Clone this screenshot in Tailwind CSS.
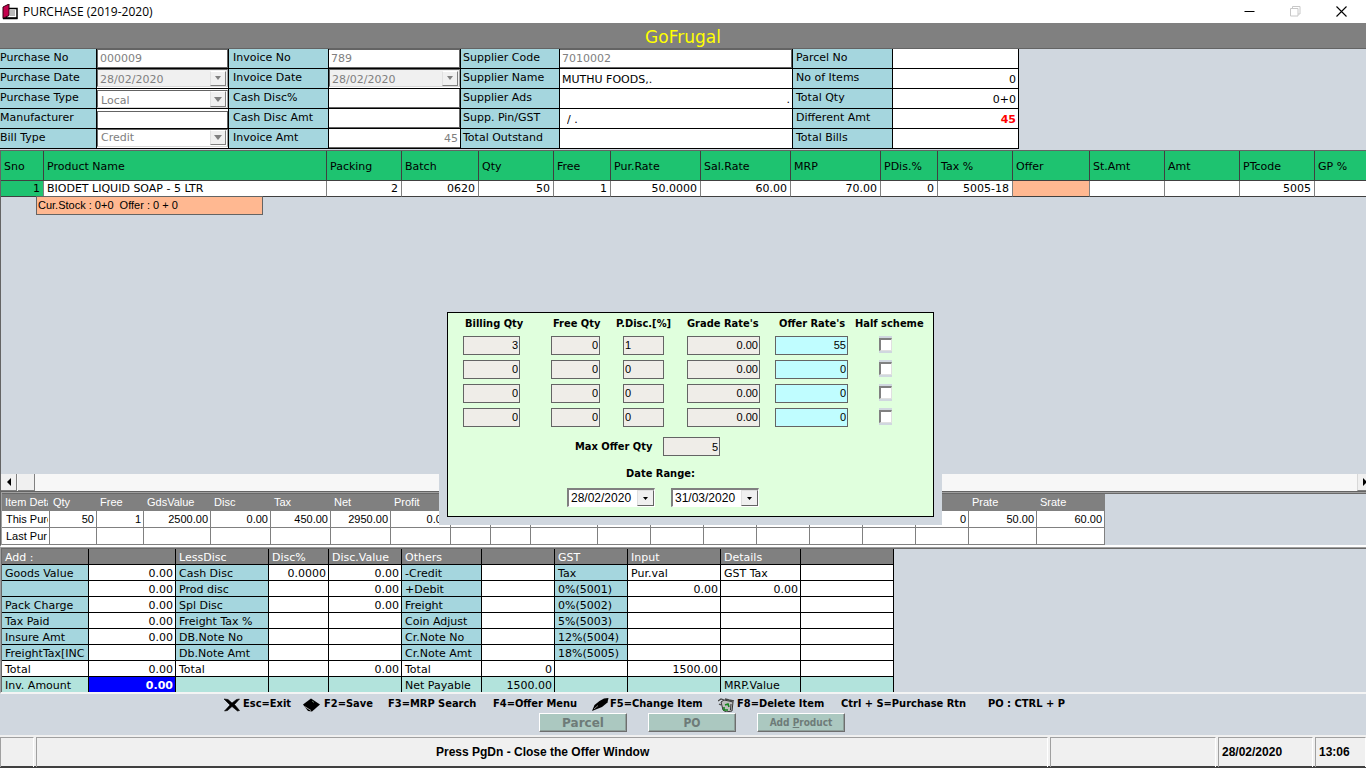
<!DOCTYPE html>
<html lang="en">
<head>
<meta charset="utf-8">
<meta name="viewport" content="width=device-width, initial-scale=1">
<title>PURCHASE (2019-2020)</title>
<script src="https://cdn.jsdelivr.net/npm/@tailwindcss/browser@4"></script>
</head>
<body class="bg-[#d0d7df] font-['DejaVu_Sans',sans-serif] text-[11px] text-black">
<div class="relative flex min-h-screen flex-col overflow-hidden">

  <!-- Window title bar -->
  <header class="flex h-[23px] items-center bg-white pl-[2px]">
    <svg class="h-[16px] w-[17px]" viewBox="0 0 17 16" aria-hidden="true">
      <path d="M5.500 4.500h9.500v9.500H4z" fill="#fff" stroke="#000" stroke-width="1.500"/>
      <path d="M8 7h5M8 9h5M8 11h5" stroke="#777"/>
      <path d="M1 3l6-3v11.500L1 14.500z" fill="#c4004c" stroke="#300010"/>
      <path d="M1 14.500h14.500" stroke="#000" stroke-width="1.500"/>
    </svg>
    <h1 class="ml-[4px] flex-1 font-['Open_Sans',sans-serif] text-[12px] leading-[22px]">PURCHASE (2019-2020)</h1>
    <div class="mr-[2px] flex h-[20px]">
      <button class="flex w-[46px] items-center justify-center" aria-label="Minimize"><svg class="h-[11px] w-[11px]" viewBox="0 0 11 11"><path d="M0.500 5.500h10" stroke="#000"/></svg></button>
      <button class="flex w-[46px] items-center justify-center" aria-label="Restore" disabled><svg class="h-[11px] w-[11px]" viewBox="0 0 11 11"><path d="M0.500 2.500h7.500v7.500H0.500zM2.500 2.500v-2h7.500v7.500h-2" fill="none" stroke="#c8c8c8"/></svg></button>
      <button class="flex w-[46px] items-center justify-center" aria-label="Close"><svg class="h-[11px] w-[11px]" viewBox="0 0 11 11"><path d="M0.500 0.500l10 10M10.500 0.500l-10 10" stroke="#000" stroke-width="1.100"/></svg></button>
    </div>
  </header>
  <div class="flex h-[26px] items-center justify-center border-b border-[#646464] bg-[#808080] pt-[3px] text-[17px] leading-[22px] text-[#ffff00]">GoFrugal</div>

  <!-- Purchase header fields -->
  <form class="grid auto-rows-[20px] grid-cols-[97px_132px_100px_132px_99px_233px_100px_126px] [&>div]:border-r [&>div]:border-b [&>div]:border-black [&>div]:bg-white [&>label]:border-r [&>label]:border-b [&>label]:border-black [&>label]:bg-[#a5d6de] [&>label]:leading-[17px] [&>label]:whitespace-nowrap [&_input]:h-full [&_input]:w-full [&_input]:px-[2px]">
    <label for="pno">Purchase No</label>
    <div><input id="pno" class="border border-[#646464] text-[#808080]" value="000009" disabled></div>
    <label for="ino" class="pl-[4px]">Invoice No</label>
    <div><input id="ino" class="border border-l-0 border-[#646464] text-[#808080]" value="789" disabled></div>
    <label for="sco" class="pl-[2px]">Supplier Code</label>
    <div><input id="sco" class="border border-l-0 border-[#646464] text-[#808080]" value="7010002" disabled></div>
    <label for="par" class="pl-[3px]">Parcel No</label>
    <div><input id="par"></div>

    <label for="pdt">Purchase Date</label>
    <div class="pb-[1px]"><div class="flex h-full items-center border border-t-[#646464] border-r-[#a0a0a0] border-b-[#d8d8d8] border-l-[#646464] bg-[#f0f0f0] pr-[1px]"><input id="pdt" class="min-w-0 flex-1 pt-[2px] pl-[3px] text-[#808080]" value="28/02/2020" disabled><button type="button" class="flex h-[15px] w-[16px] shrink-0 items-center justify-center border border-t-white border-r-[#808080] border-b-[#808080] border-l-[#e0e0e0] bg-[#f0f0f0]" aria-label="Open purchase date" disabled><svg class="h-[4px] w-[6px]" viewBox="0 0 6 4"><path d="M0 0h6L3 4z" fill="#808080"/></svg></button></div></div>
    <label for="idt" class="pl-[4px]">Invoice Date</label>
    <div class="pb-[1px]"><div class="flex h-full items-center border border-t-[#646464] border-r-[#a0a0a0] border-b-[#d8d8d8] border-l-[#646464] bg-[#f0f0f0] pr-[1px]"><input id="idt" class="min-w-0 flex-1 pt-[2px] pl-[2px] text-[#808080]" value="28/02/2020" disabled><button type="button" class="flex h-[15px] w-[16px] shrink-0 items-center justify-center border border-t-white border-r-[#808080] border-b-[#808080] border-l-[#e0e0e0] bg-[#f0f0f0]" aria-label="Open invoice date" disabled><svg class="h-[4px] w-[6px]" viewBox="0 0 6 4"><path d="M0 0h6L3 4z" fill="#808080"/></svg></button></div></div>
    <label for="sna" class="pl-[2px]">Supplier Name</label>
    <div><input id="sna" class="pt-[2px] pl-[3px]" value="MUTHU FOODS,."></div>
    <label for="noi" class="pl-[3px]">No of Items</label>
    <div><input id="noi" class="pt-[2px] text-right" value="0"></div>

    <label for="pty">Purchase Type</label>
    <div class="relative pt-[1px]"><select id="pty" class="h-full w-full appearance-none border border-t-[#646464] border-r-[#a0a0a0] border-b-[#d8d8d8] border-l-[#646464] pt-[2px] pl-[3px] text-[#808080]" disabled><option>Local</option></select><span class="pointer-events-none absolute top-[2px] right-[2px] flex h-[16px] w-[16px] items-center justify-center border border-t-white border-r-[#808080] border-b-[#808080] border-l-[#e0e0e0] bg-[#f0f0f0]"><svg class="h-[5px] w-[8px]" viewBox="0 0 8 5"><path d="M0 0h8L4 5z" fill="#808080"/></svg></span></div>
    <label for="cdp" class="pl-[4px]">Cash Disc%</label>
    <div><input id="cdp" class="border border-t-0 border-l-0 border-[#646464]"></div>
    <label for="sad" class="pl-[2px]">Supplier Ads</label>
    <div><input id="sad" class="pt-[2px] text-right" value="."></div>
    <label for="tqt" class="pl-[3px]">Total Qty</label>
    <div><input id="tqt" class="pt-[2px] text-right" value="0+0"></div>

    <label for="man">Manufacturer</label>
    <div class="pt-[2px]"><input id="man" class="border border-b-0 border-[#646464]"></div>
    <label for="cda" class="pl-[4px]">Cash Disc Amt</label>
    <div><input id="cda" class="border border-t-0 border-l-0 border-[#646464]"></div>
    <label for="spg" class="pl-[2px]">Supp. Pin/GST</label>
    <div class="pl-[5px]"><input id="spg" class="pt-[2px]" value="/ ."></div>
    <label for="dam" class="pl-[3px]">Different Amt</label>
    <div><input id="dam" class="pt-[2px] text-right font-bold text-[#ff0000]" value="45"></div>

    <label for="bty">Bill Type</label>
    <div class="relative pb-[1px]"><select id="bty" class="h-full w-full appearance-none border border-t-[#646464] border-r-[#a0a0a0] border-b-[#d8d8d8] border-l-[#646464] pl-[3px] text-[#808080]" disabled><option>Credit</option></select><span class="pointer-events-none absolute top-[1px] right-[2px] flex h-[15px] w-[16px] items-center justify-center border border-t-white border-r-[#808080] border-b-[#808080] border-l-[#e0e0e0] bg-[#f0f0f0]"><svg class="h-[5px] w-[8px]" viewBox="0 0 8 5"><path d="M0 0h8L4 5z" fill="#808080"/></svg></span></div>
    <label for="iam" class="pl-[4px]">Invoice Amt</label>
    <div><input id="iam" class="border-b border-[#646464] pr-[1px] text-right text-[#808080]" value="45" disabled></div>
    <label for="tou" class="pl-[2px]">Total Outstand</label>
    <div><input id="tou"></div>
    <label for="tbi" class="pl-[3px]">Total Bills</label>
    <div><input id="tbi"></div>
  </form>

  <!-- Purchase lines -->
  <main class="mt-[1px] flex flex-1 flex-col border-t border-l border-[#646464]">
    <table class="w-full table-fixed border-separate border-spacing-0 whitespace-nowrap [&_td]:h-[16px] [&_td]:overflow-hidden [&_td]:border-r [&_td]:border-b [&_td]:border-r-[#808080] [&_td]:border-b-[#404040] [&_td]:p-0 [&_td]:px-[3px] [&_td]:pt-[1px] [&_td]:text-right [&_td]:leading-[14px] [&_th]:h-[30px] [&_th]:border-r [&_th]:border-b [&_th]:border-[#404040] [&_th]:bg-[#1ec370] [&_th]:p-0 [&_th]:pt-[3px] [&_th]:pl-[3px] [&_th]:text-left [&_th]:font-normal [&_tr>*:last-child]:border-r-0">
      <colgroup><col class="w-[43px]"><col class="w-[283px]"><col class="w-[75px]"><col class="w-[77px]"><col class="w-[75px]"><col class="w-[57px]"><col class="w-[90px]"><col class="w-[90px]"><col class="w-[90px]"><col class="w-[57px]"><col class="w-[75px]"><col class="w-[77px]"><col class="w-[75px]"><col class="w-[75px]"><col class="w-[75px]"><col></colgroup>
      <thead><tr><th>Sno</th><th>Product Name</th><th>Packing</th><th>Batch</th><th>Qty</th><th>Free</th><th>Pur.Rate</th><th>Sal.Rate</th><th>MRP</th><th>PDis.%</th><th>Tax %</th><th>Offer</th><th>St.Amt</th><th>Amt</th><th>PTcode</th><th>GP %</th></tr></thead>
      <tbody class="bg-white"><tr><td class="bg-[#1ec370]">1</td><td><span class="block text-left">BIODET LIQUID SOAP - 5 LTR</span></td><td>2</td><td>0620</td><td>50</td><td>1</td><td>50.0000</td><td>60.00</td><td>70.00</td><td>0</td><td>5005-18</td><td class="bg-[#ffb891]"></td><td></td><td></td><td>5005</td><td></td></tr></tbody>
    </table>
    <p class="-mt-px ml-[35px] h-[19px] w-[227px] border border-[#646464] bg-[#ffb891] pl-[1px] font-['Liberation_Sans',sans-serif] text-[11px] leading-[16px] whitespace-pre">Cur.Stock : 0+0  Offer : 0 + 0</p>
  </main>

  <div class="flex h-[17px] border-l border-[#646464] bg-[#f7f7f7]">
    <button class="flex w-[16px] items-center justify-center border-r border-b border-[#808080] bg-[#f0f0f0]" aria-label="Scroll left"><svg class="h-[8px] w-[4px]" viewBox="0 0 4 8"><path d="M4 0v8L0 4z"/></svg></button>
    <button class="ml-[1px] w-[17px] border-r border-b border-[#808080] bg-[#f0f0f0]" aria-label="Scroll thumb"></button>
    <button class="ml-auto flex w-[9px] items-center justify-end overflow-hidden border-b border-l border-b-[#808080] border-l-[#d8d8d8] bg-[#f0f0f0]" aria-label="Scroll right"><svg class="h-[8px] w-[3px]" viewBox="0 0 3 8"><path d="M0 0v8L3 5V3z"/></svg></button>
  </div>

  <!-- Item details -->
  <section class="border-t border-b-2 border-l border-[#646464] border-b-white">
    <div class="border-t border-l border-[#a0a0a0]"><div class="border-t border-[#696969]">
    <table class="w-[1103px] table-fixed border-separate border-spacing-0 font-['Liberation_Sans',sans-serif] whitespace-nowrap [&_td]:h-[17px] [&_td]:overflow-hidden [&_td]:border-r [&_td]:border-b [&_td]:border-[#808080] [&_td]:bg-white [&_td]:p-0 [&_td]:pr-[2px] [&_td]:text-right [&_td]:leading-[16px] [&_th]:h-[17px] [&_th]:overflow-hidden [&_th]:bg-[#808080] [&_th]:p-0 [&_th]:pl-[3px] [&_th]:text-left [&_th]:leading-[17px] [&_th]:font-normal [&_th]:text-white">
      <colgroup><col class="w-[48px]"><col class="w-[47px]"><col class="w-[47px]"><col class="w-[67px]"><col class="w-[60px]"><col class="w-[60px]"><col class="w-[60px]"><col class="w-[60px]"><col class="w-[40px]"><col class="w-[40px]"><col class="w-[67px]"><col class="w-[53px]"><col class="w-[53px]"><col class="w-[53px]"><col class="w-[53px]"><col class="w-[53px]"><col class="w-[53px]"><col class="w-[53px]"><col class="w-[68px]"><col class="w-[68px]"></colgroup>
      <thead><tr><th><span class="block w-[43px] overflow-hidden">Item Deta</span></th><th>Qty</th><th>Free</th><th>GdsValue</th><th>Disc</th><th>Tax</th><th>Net</th><th>Profit</th><th></th><th></th><th></th><th></th><th></th><th></th><th></th><th></th><th></th><th></th><th>Prate</th><th>Srate</th></tr></thead>
      <tbody>
        <tr><td><span class="ml-[4px] block w-[42px] overflow-hidden text-left">This Purc</span></td><td>50</td><td>1</td><td>2500.00</td><td>0.00</td><td>450.00</td><td>2950.00</td><td>0.00</td><td></td><td></td><td></td><td></td><td></td><td></td><td></td><td></td><td></td><td>0</td><td>50.00</td><td>60.00</td></tr>
        <tr><td><span class="ml-[4px] block w-[42px] overflow-hidden text-left">Last Pur</span></td><td></td><td></td><td></td><td></td><td></td><td></td><td></td><td></td><td></td><td></td><td></td><td></td><td></td><td></td><td></td><td></td><td></td><td></td><td></td></tr>
      </tbody>
    </table>
    </div></div>
  </section>

  <!-- Totals -->
  <section class="border-t border-b-2 border-l border-[#a0a0a0] border-b-[#f4f4f4]">
    <div class="border-t border-l border-[#696969]">
    <table class="w-[892px] table-fixed border-separate border-spacing-0 whitespace-nowrap [&_td]:h-[16px] [&_td]:overflow-hidden [&_td]:border-r [&_td]:border-b [&_td]:border-black [&_td]:p-0 [&_td]:pt-[2px] [&_td]:pr-[2px] [&_td]:text-right [&_td]:leading-[13px] [&_th]:h-[16px] [&_th]:overflow-hidden [&_th]:border-r [&_th]:border-b [&_th]:border-black [&_th]:p-0 [&_th]:pt-[2px] [&_th]:pl-[3px] [&_th]:text-left [&_th]:leading-[13px] [&_th]:font-normal">
      <colgroup><col class="w-[87px]"><col class="w-[87px]"><col class="w-[93px]"><col class="w-[60px]"><col class="w-[73px]"><col class="w-[80px]"><col class="w-[73px]"><col class="w-[73px]"><col class="w-[93px]"><col class="w-[80px]"><col class="w-[93px]"></colgroup>
      <thead class="bg-[#808080] text-white"><tr><th>Add :</th><th></th><th>LessDisc</th><th>Disc%</th><th>Disc.Value</th><th>Others</th><th></th><th>GST</th><th>Input</th><th>Details</th><th></th></tr></thead>
      <tbody class="bg-white">
        <tr><th class="bg-[#a5d6de]">Goods Value</th><td>0.00</td><th class="bg-[#a5d6de]">Cash Disc</th><td>0.0000</td><td>0.00</td><th class="bg-[#a5d6de]">-Credit</th><td></td><th class="bg-[#a5d6de]">Tax</th><th>Pur.val</th><th>GST Tax</th><td></td></tr>
        <tr><th class="bg-[#a5d6de]"></th><td>0.00</td><th class="bg-[#a5d6de]">Prod disc</th><td></td><td>0.00</td><th class="bg-[#a5d6de]">+Debit</th><td></td><th class="bg-[#a5d6de]">0%(5001)</th><td>0.00</td><td>0.00</td><td></td></tr>
        <tr><th class="bg-[#a5d6de]">Pack Charge</th><td>0.00</td><th class="bg-[#a5d6de]">Spl Disc</th><td></td><td>0.00</td><th class="bg-[#a5d6de]">Freight</th><td></td><th class="bg-[#a5d6de]">0%(5002)</th><td></td><td></td><td></td></tr>
        <tr><th class="bg-[#a5d6de]">Tax Paid</th><td>0.00</td><th class="bg-[#a5d6de]">Freight Tax %</th><td></td><td></td><th class="bg-[#a5d6de]">Coin Adjust</th><td></td><th class="bg-[#a5d6de]">5%(5003)</th><td></td><td></td><td></td></tr>
        <tr><th class="bg-[#a5d6de]">Insure Amt</th><td>0.00</td><th class="bg-[#a5d6de]">DB.Note No</th><td></td><td></td><th class="bg-[#a5d6de]">Cr.Note No</th><td></td><th class="bg-[#a5d6de]">12%(5004)</th><td></td><td></td><td></td></tr>
        <tr><th class="bg-[#a5d6de]"><span class="block w-[82px] overflow-hidden">FreightTax[INC</span></th><td></td><th class="bg-[#a5d6de]">Db.Note Amt</th><td></td><td></td><th class="bg-[#a5d6de]">Cr.Note Amt</th><td></td><th class="bg-[#a5d6de]">18%(5005)</th><td></td><td></td><td></td></tr>
        <tr><th>Total</th><td>0.00</td><th>Total</th><td></td><td>0.00</td><th>Total</th><td>0</td><td></td><td>1500.00</td><td></td><td></td></tr>
        <tr class="bg-[#b2e3dc] [&>td]:h-[15px] [&>td]:border-b-0 [&>th]:h-[15px] [&>th]:border-b-0"><th>Inv. Amount</th><td class="bg-[#0000ff] font-bold text-white">0.00</td><td></td><td></td><td></td><th>Net Payable</th><td>1500.00</td><td></td><td></td><th>MRP.Value</th><td></td></tr>
      </tbody>
    </table>
    </div>
  </section>

  <!-- Shortcut keys -->
  <nav class="flex h-[19px] items-center pt-[2px] pl-[224px] font-['DejaVu_Sans_Condensed','DejaVu_Sans',sans-serif] font-bold whitespace-nowrap">
    <button class="flex w-[79px] items-center gap-[2px]"><svg class="h-[14px] w-[17px]" viewBox="0 0 17 14"><path d="M0 1l4 .5 4 3.500 4.500-3.500 3-.5-5 5.500 5 6-2 .5-5.500-4.500L3.500 12.500l-3 .5 5.500-6z" stroke="#000" stroke-width=".6"/></svg>Esc=Exit</button>
    <button class="flex w-[85px] items-center gap-[4px]"><svg class="h-[14px] w-[17px]" viewBox="0 0 17 14"><path d="M0 6.500L8 .5l9 6L9 13.500 5 13z"/><path d="M1.500 8.500l6.500 4" stroke="#aaa" fill="none"/><path d="M9 3l2 1.500" stroke="#667766"/></svg>F2=Save</button>
    <button class="w-[105px] text-left">F3=MRP Search</button>
    <button class="w-[99px] text-left">F4=Offer Menu</button>
    <button class="flex w-[126px] items-center gap-[1px]"><svg class="h-[14px] w-[17px]" viewBox="0 0 17 14"><path d="M0 13l2.500-6 5-4L12 .5l4.500-.5-1 4.500L10 9l-5 2z"/><path d="M2 11L6 7.500" stroke="#aaa" stroke-width=".8"/></svg>F5=Change Item</button>
    <button class="flex w-[123px] items-center gap-[2px]"><svg class="h-[14px] w-[17px]" viewBox="0 0 17 14"><path d="M3 4l3-2 5 1 4 1-1 9-6 1-3-2z" fill="#bdbdbd" stroke="#333"/><path d="M0 3l3-2 3 1M7 1l4 1 5 1M1 6l2 1" stroke="#444" fill="none" stroke-width="1.300"/><path d="M7 7l3-1 1 3M6 9l0 3 4 0" stroke="#16851e" stroke-width="1.600" fill="none"/><path d="M13 6l-.5 6" stroke="#333"/></svg>F8=Delete Item</button>
    <button class="w-[147px] text-left">Ctrl + S=Purchase Rtn</button>
    <button class="text-left">PO : CTRL + P</button>
  </nav>
  <div class="flex h-[22px] items-start gap-[21px] pl-[539px] text-[#6e7b78] [&>button]:h-[19px] [&>button]:w-[88px] [&>button]:border [&>button]:border-t-white [&>button]:border-r-[#6e6e6e] [&>button]:border-b-[#6e6e6e] [&>button]:border-l-white [&>button]:bg-[#abc8c0] [&>button]:leading-[16px] [&>button]:font-bold [&>button]:shadow-[inset_-1px_-1px_0_#8fa09b]">
    <button class="text-[12px]" disabled>Parcel</button>
    <button class="font-['DejaVu_Sans_Condensed','DejaVu_Sans',sans-serif] text-[12px]" disabled>PO</button>
    <button class="font-['DejaVu_Sans_Condensed','DejaVu_Sans',sans-serif] text-[10px]" disabled>Add <u>P</u>roduct</button>
  </div>

  <!-- Status bar -->
  <footer class="grid h-[33px] grid-cols-[34px_1fr_166px_95px_51px] gap-x-[2px] border-t-2 border-b-2 border-t-[#f0f0f0] border-b-[#404040] bg-[#f0f0f0] font-['Liberation_Sans',sans-serif] text-[12px] leading-[29px] font-bold whitespace-nowrap [&>div]:border-t [&>div]:border-r [&>div]:border-l [&>div]:border-t-[#a0a0a0] [&>div]:border-r-white [&>div]:border-l-[#a0a0a0]">
    <div></div>
    <div class="pl-[399px]">Press PgDn - Close the Offer Window</div>
    <div></div>
    <div class="pl-[3px]">28/02/2020</div>
    <div class="pl-[3px]">13:06</div>
  </footer>

  <!-- Offer window -->
  <div class="absolute top-[304px] left-[439px] bg-[#d0d7df] p-[8px]" role="dialog" aria-label="Offer">
    <div class="flex h-[205px] w-[487px] flex-col border border-black bg-[#e0ffdd]">
      <div class="grid grid-cols-[88px_63px_71px_92px_76px_1fr] pt-[3px] pl-[17px] font-['DejaVu_Sans_Condensed','DejaVu_Sans',sans-serif] leading-[15px] font-bold whitespace-nowrap">
        <span>Billing Qty</span><span>Free Qty</span><span>P.Disc.[%]</span><span>Grade Rate's</span><span>Offer Rate's</span><span>Half scheme</span>
      </div>
      <div class="mt-[5px] flex flex-col gap-[5px] pl-[15px] font-['Liberation_Sans',sans-serif] [&_span]:flex [&_span]:h-[17px] [&_span]:w-[13px] [&_span]:items-center [&_span]:bg-[#d0d7df] [&>div]:flex [&>div]:h-[19px] [&>div>input]:border [&>div>input]:border-[#646464] [&>div>input]:px-[1px]">
        <div>
          <input class="w-[57px] bg-[#efede8] text-right" aria-label="Billing Qty 1" value="3" readonly><input class="ml-[31px] w-[49px] bg-[#efede8] text-right" aria-label="Free Qty 1" value="0" readonly><input class="ml-[23px] w-[41px] bg-[#efede8]" aria-label="P.Disc 1" value="1" readonly><input class="ml-[23px] w-[73px] bg-[#efede8] text-right" aria-label="Grade Rate 1" value="0.00" readonly><input class="ml-[15px] w-[73px] bg-[#c0fdff] text-right" aria-label="Offer Rate 1" value="55"><span class="ml-[31px]"><input type="checkbox" class="h-[13px] w-[13px] appearance-none border-t-2 border-r border-b border-l-2 border-t-[#808080] border-r-[#e0e0e0] border-b-[#e0e0e0] border-l-[#808080] bg-white" aria-label="Half scheme 1"></span>
        </div>
        <div>
          <input class="w-[57px] bg-[#efede8] text-right" aria-label="Billing Qty 2" value="0" readonly><input class="ml-[31px] w-[49px] bg-[#efede8] text-right" aria-label="Free Qty 2" value="0" readonly><input class="ml-[23px] w-[41px] bg-[#efede8]" aria-label="P.Disc 2" value="0" readonly><input class="ml-[23px] w-[73px] bg-[#efede8] text-right" aria-label="Grade Rate 2" value="0.00" readonly><input class="ml-[15px] w-[73px] bg-[#c0fdff] text-right" aria-label="Offer Rate 2" value="0"><span class="ml-[31px]"><input type="checkbox" class="h-[13px] w-[13px] appearance-none border-t-2 border-r border-b border-l-2 border-t-[#808080] border-r-[#e0e0e0] border-b-[#e0e0e0] border-l-[#808080] bg-white" aria-label="Half scheme 2"></span>
        </div>
        <div>
          <input class="w-[57px] bg-[#efede8] text-right" aria-label="Billing Qty 3" value="0" readonly><input class="ml-[31px] w-[49px] bg-[#efede8] text-right" aria-label="Free Qty 3" value="0" readonly><input class="ml-[23px] w-[41px] bg-[#efede8]" aria-label="P.Disc 3" value="0" readonly><input class="ml-[23px] w-[73px] bg-[#efede8] text-right" aria-label="Grade Rate 3" value="0.00" readonly><input class="ml-[15px] w-[73px] bg-[#c0fdff] text-right" aria-label="Offer Rate 3" value="0"><span class="ml-[31px]"><input type="checkbox" class="h-[13px] w-[13px] appearance-none border-t-2 border-r border-b border-l-2 border-t-[#808080] border-r-[#e0e0e0] border-b-[#e0e0e0] border-l-[#808080] bg-white" aria-label="Half scheme 3"></span>
        </div>
        <div>
          <input class="w-[57px] bg-[#efede8] text-right" aria-label="Billing Qty 4" value="0" readonly><input class="ml-[31px] w-[49px] bg-[#efede8] text-right" aria-label="Free Qty 4" value="0" readonly><input class="ml-[23px] w-[41px] bg-[#efede8]" aria-label="P.Disc 4" value="0" readonly><input class="ml-[23px] w-[73px] bg-[#efede8] text-right" aria-label="Grade Rate 4" value="0.00" readonly><input class="ml-[15px] w-[73px] bg-[#c0fdff] text-right" aria-label="Offer Rate 4" value="0"><span class="ml-[31px]"><input type="checkbox" class="h-[13px] w-[13px] appearance-none border-t-2 border-r border-b border-l-2 border-t-[#808080] border-r-[#e0e0e0] border-b-[#e0e0e0] border-l-[#808080] bg-white" aria-label="Half scheme 4"></span>
        </div>
      </div>
      <div class="mt-[10px] flex items-center pl-[127px]">
        <label for="moq" class="w-[88px] pt-[2px] font-['DejaVu_Sans_Condensed','DejaVu_Sans',sans-serif] font-bold whitespace-nowrap">Max Offer Qty</label>
        <input id="moq" class="h-[19px] w-[57px] border border-[#646464] bg-[#efede8] px-[1px] text-right font-['Liberation_Sans',sans-serif]" value="5" readonly>
      </div>
      <div class="mt-[10px] pl-[178px] font-['DejaVu_Sans_Condensed','DejaVu_Sans',sans-serif] leading-[15px] font-bold">Date Range:</div>
      <div class="mt-[7px] flex gap-[16px] pl-[119px] font-['Liberation_Sans',sans-serif] text-[12px] [&>div]:flex [&>div]:h-[19px] [&>div]:w-[88px] [&>div]:border-t-2 [&>div]:border-r [&>div]:border-b [&>div]:border-l-2 [&>div]:border-t-[#808080] [&>div]:border-r-white [&>div]:border-b-white [&>div]:border-l-[#808080] [&>div]:bg-white">
        <div><input class="min-w-0 flex-1 pl-[2px]" aria-label="From date" value="28/02/2020"><button class="flex w-[17px] items-center justify-center border border-t-[#e0e0e0] border-r-[#646464] border-b-[#646464] border-l-[#e0e0e0] bg-[#f0f0f0]" aria-label="Open from date"><svg class="h-[3px] w-[5px]" viewBox="0 0 5 3"><path d="M0 0h5L2.500 3z"/></svg></button></div>
        <div><input class="min-w-0 flex-1 pl-[2px]" aria-label="To date" value="31/03/2020"><button class="flex w-[17px] items-center justify-center border border-t-[#e0e0e0] border-r-[#646464] border-b-[#646464] border-l-[#e0e0e0] bg-[#f0f0f0]" aria-label="Open to date"><svg class="h-[3px] w-[5px]" viewBox="0 0 5 3"><path d="M0 0h5L2.500 3z"/></svg></button></div>
      </div>
    </div>
  </div>
</div>
</body>
</html>
